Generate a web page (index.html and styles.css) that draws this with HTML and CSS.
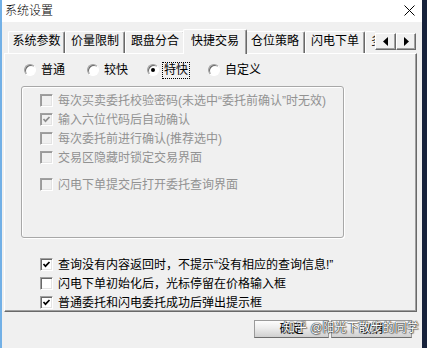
FILE: index.html
```html
<!DOCTYPE html>
<html lang="zh-CN">
<head>
<meta charset="utf-8">
<title>系统设置</title>
<link rel="stylesheet" href="styles.css">
</head>
<body>
<div class="window">
  <div class="titlebar">
    <span class="title">系统设置</span>
    <svg class="close" width="11" height="11" viewBox="0 0 11 11"><path d="M0.5 0.5 L10.5 10.5 M10.5 0.5 L0.5 10.5" stroke="#000" stroke-width="1" fill="none"/></svg>
  </div>
  <div class="client">
    <div class="tabstrip">
      <div class="tabs">
        <div class="tab first">系统参数</div>
        <div class="tab">价量限制</div>
        <div class="tab">跟盘分合</div>
        <div class="tab active">快捷交易</div>
        <div class="tab">仓位策略</div>
        <div class="tab">闪电下单</div>
        <div class="tab">多空设置</div>
      </div>
      <div class="spin">
        <div class="spin-btn"><svg width="5" height="9" viewBox="0 0 5 9"><path d="M5 0 L0 4.5 L5 9 Z" fill="#000"/></svg></div>
        <div class="spin-btn narrow"><svg width="5" height="9" viewBox="0 0 5 9"><path d="M0 0 L5 4.5 L0 9 Z" fill="#000"/></svg></div>
      </div>
    </div>
    <div class="panel">
      <div class="radios">
        <label class="radio r1"><span class="rb"></span><span>普通</span></label>
        <label class="radio r2"><span class="rb"></span><span>较快</span></label>
        <label class="radio r3"><span class="rb on"></span><span class="focus">特快</span></label>
        <label class="radio"><span class="rb"></span><span>自定义</span></label>
      </div>
      <div class="group">
        <div class="row disabled"><span class="cb"></span><span>每次买卖委托校验密码(未选中“委托前确认”时无效)</span></div>
        <div class="row disabled"><span class="cb"><svg width="11" height="11" viewBox="0 0 11 11"><path d="M2.5 5 L4.5 7.2 L8.5 3" stroke="#8d8d8d" stroke-width="1.7" fill="none"/></svg></span><span>输入六位代码后自动确认</span></div>
        <div class="row disabled"><span class="cb"></span><span>每次委托前进行确认(推荐选中)</span></div>
        <div class="row disabled"><span class="cb"></span><span>交易区隐藏时锁定交易界面</span></div>
        <div class="row disabled gap"><span class="cb"></span><span>闪电下单提交后打开委托查询界面</span></div>
      </div>
      <div class="opts">
        <div class="row"><span class="cb"><svg width="11" height="11" viewBox="0 0 11 11"><path d="M2.5 5 L4.5 7.2 L8.5 3" stroke="#000" stroke-width="1.7" fill="none"/></svg></span><span>查询没有内容返回时，不提示“没有相应的查询信息!”</span></div>
        <div class="row"><span class="cb"></span><span>闪电下单初始化后，光标停留在价格输入框</span></div>
        <div class="row"><span class="cb"><svg width="11" height="11" viewBox="0 0 11 11"><path d="M2.5 5 L4.5 7.2 L8.5 3" stroke="#000" stroke-width="1.7" fill="none"/></svg></span><span>普通委托和闪电委托成功后弹出提示框</span></div>
      </div>
    </div>
    <div class="buttons">
      <div class="btn ok">确定</div>
      <div class="btn cancel">取消</div>
    </div>
    <div class="watermark">知乎 @阳光下散步的同学</div>
  </div>
</div>
</body>
</html>
```

FILE: styles.css
```css
* { box-sizing: border-box; }
html, body { margin: 0; padding: 0; }
body {
  width: 427px;
  height: 348px;
  overflow: hidden;
  background: #f0f0f0;
  font-family: "Liberation Sans", "Noto Sans CJK SC", sans-serif;
  font-size: 12px;
  color: #000;
}
.window {
  width: 427px;
  height: 348px;
  border-left: 2px solid #72b0e6;
  border-right: 5px solid #17223b;
  display: flex;
  flex-direction: column;
  background: #f0f0f0;
}
.titlebar {
  height: 22px;
  flex-shrink: 0;
  background: #fff;
  display: flex;
  align-items: center;
  justify-content: space-between;
  padding: 0 7px 0 3px;
}
.title { line-height: 16px; font-weight: 300; }
.close { display: block; margin-top: -1px; }
.client {
  flex: 1;
  position: relative;
  padding: 7px 5px 0 2px;
}
.tabstrip {
  display: flex;
  height: 25px;
  padding-left: 4px;
  position: relative;
  z-index: 1;
}
.tabs {
  flex: 1;
  display: flex;
  align-items: flex-end;
  overflow: hidden;
}
.tab {
  flex-shrink: 0;
  width: 60px;
  height: 22px;
  margin-bottom: 1px;
  border-top: 1px solid #fff;
  border-left: 1px solid #fff;
  border-right: 1px solid #696969;
  box-shadow: inset -1px 0 0 #a0a0a0;
  border-radius: 2px 2px 0 0;
  text-align: center;
  line-height: 19px;
  white-space: nowrap;
  background: #f0f0f0;
}
.tab.first { width: 57px; }
.tab.active {
  width: 64px;
  height: 25px;
  margin: 0 -2px;
  line-height: 22px;
  position: relative;
  z-index: 2;
}
.spin {
  display: flex;
  align-self: flex-start;
  margin-top: 4px;
  margin-right: 1px;
}
.spin-btn {
  width: 21px;
  height: 17px;
  background: #f0f0f0;
  border: 1px solid;
  border-color: #fff #696969 #696969 #fff;
  box-shadow: inset -1px -1px 0 #a0a0a0;
  display: flex;
  align-items: center;
  justify-content: center;
}
.spin-btn.narrow { width: 20px; }
.spin-btn svg { display: block; }
.panel {
  height: 259px;
  margin-top: -1px;
  border: 1px solid;
  border-color: #fff #696969 #696969 #fff;
  box-shadow: inset -1px -1px 0 #a0a0a0;
  position: relative;
  z-index: 0;
}
.radios {
  display: flex;
  align-items: center;
  height: 16px;
  margin: 8px 0 0 19px;
}
.radio {
  display: flex;
  align-items: center;
  gap: 5px;
  line-height: 16px;
}
.r1 { width: 63px; }
.r2 { width: 60px; }
.r3 { width: 61px; }
.rb {
  width: 12px;
  height: 12px;
  flex-shrink: 0;
  border-radius: 50%;
  background: #fff;
  border: 1px solid;
  border-color: #a0a0a0 #fff #fff #a0a0a0;
  box-shadow: inset 1px 1px 0 #696969;
  position: relative;
}
.rb.on::after {
  content: "";
  position: absolute;
  left: 3px;
  top: 3px;
  width: 4px;
  height: 4px;
  border-radius: 50%;
  background: #000;
}
.focus {
  outline: 1px dotted #000;
  padding: 0 1px;
  margin-left: -1px;
  line-height: 15px;
}
.group {
  margin: 8px 0 0 16px;
  width: 323px;
  height: 152px;
  border: 1px solid #a8a8a8;
  border-radius: 3px;
  box-shadow: 1px 1px 0 #fff, inset 1px 1px 0 #fff;
  padding: 4px 0 0 18px;
}
.row {
  display: flex;
  align-items: center;
  gap: 5px;
  height: 19px;
  line-height: 16px;
  white-space: nowrap;
}
.row.gap { margin-top: 8px; }
.cb {
  width: 13px;
  height: 13px;
  flex-shrink: 0;
  border: 1px solid;
  border-color: #a0a0a0 #fff #fff #a0a0a0;
  box-shadow: inset 1px 1px 0 #696969, inset -1px -1px 0 #e3e3e3;
  background: #fff;
  display: flex;
  align-items: center;
  justify-content: center;
}
.cb svg { display: block; }
.disabled { color: #929292; }
.disabled .cb {
  background: #f0f0f0;
  box-shadow: inset 1px 1px 0 #9a9a9a, inset -1px -1px 0 #e3e3e3;
}
.opts { margin: 17px 0 0 35px; }
.buttons {
  display: flex;
  justify-content: flex-end;
  gap: 2px;
  margin-top: 8px;
  padding-right: 5px;
}
.btn {
  height: 18px;
  border: 1px solid #9a9a9a;
  border-bottom-color: #6d6d6d;
  background: linear-gradient(#fdfdfd, #ececec 45%, #cfcfcf);
  text-align: center;
  line-height: 16px;
}
.btn.ok { width: 75px; }
.btn.cancel { width: 81px; }
.watermark {
  position: absolute;
  left: 281px;
  top: 298px;
  font-size: 12px;
  line-height: 16px;
  color: #fff;
  white-space: nowrap;
  text-shadow: 0 0 1px #333, 0 0 1px #333, 0 0 1px #333, 1px 1px 1px rgba(0,0,0,0.35);
}
```
